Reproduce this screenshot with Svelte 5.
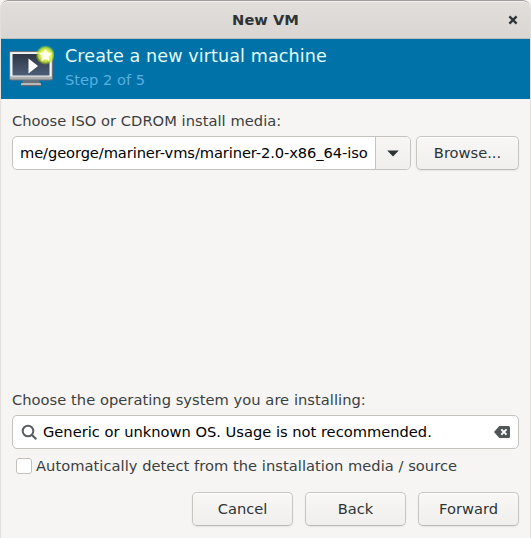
<script>
  let isoPath = 'me/george/mariner-vms/mariner-2.0-x86_64-iso';
  let osName = 'Generic or unknown OS. Usage is not recommended.';
  const actions = ['Cancel', 'Back', 'Forward'];
</script>

<div class="window">
  <header class="titlebar">
    <span class="title">New VM</span>
    <button class="close" aria-label="Close">
      <svg width="10" height="10" viewBox="0 0 10 10"><path d="M1.4 1.4 8.6 8.6M8.6 1.4 1.4 8.6" stroke="#2e3436" stroke-width="2.3" /></svg>
    </button>
  </header>

  <section class="banner">
    <svg class="vm" width="48" height="46" viewBox="0 0 48 46">
      <defs>
        <linearGradient id="screen" x1="0" y1="0" x2="0" y2="1">
          <stop offset="0" stop-color="#2e3644" /><stop offset="1" stop-color="#4d5e78" />
        </linearGradient>
        <linearGradient id="chin" x1="0" y1="0" x2="0" y2="1">
          <stop offset="0" stop-color="#e4e4e4" /><stop offset="1" stop-color="#a9abad" />
        </linearGradient>
        <radialGradient id="glow">
          <stop offset="0" stop-color="#fffff0" /><stop offset=".4" stop-color="#f4ff70" />
          <stop offset=".72" stop-color="#c8e830" stop-opacity=".85" /><stop offset="1" stop-color="#9dcc20" stop-opacity="0" />
        </radialGradient>
      </defs>
      <path d="M17 37h16l1 4H16z" fill="#68737c" />
      <rect x="15" y="40" width="20" height="3" rx="1" fill="#b9b9b9" />
      <rect x="15" y="42" width="20" height="1.2" rx=".6" fill="#696969" />
      <rect x="3.5" y="8.5" width="43" height="28.5" rx="1.5" fill="url(#chin)" stroke="#6d7378" />
      <rect x="4.5" y="9.5" width="41" height="24" fill="#f3f3f3" />
      <rect x="6.5" y="11" width="37" height="21.5" fill="url(#screen)" />
      <path d="M22.5 15.5v15l9.5-7.5z" fill="#fff" />
      <circle cx="39.5" cy="12" r="10" fill="url(#glow)" />
      <path d="m39.5 6.2 1.8 3.9 4.3.4-3.3 3 1 4.3-3.8-2.3-3.8 2.3 1-4.3-3.3-3 4.3-.4z" fill="#fffff4" stroke="#fffff4" stroke-opacity=".4" />
    </svg>
    <div class="heading">
      <h1>Create a new virtual machine</h1>
      <p>Step 2 of 5</p>
    </div>
  </section>

  <main>
    <label for="iso">Choose ISO or CDROM install media:</label>
    <div class="media">
      <div class="combo">
        <input id="iso" bind:value={isoPath} />
        <button class="drop" aria-label="Show media">
          <svg width="12" height="7" viewBox="0 0 12 7"><path d="M.2.6h11.6L6 6.6z" fill="#2e3436" /></svg>
        </button>
      </div>
      <button class="btn browse">Browse...</button>
    </div>

    <div class="spacer"></div>

    <label for="os">Choose the operating system you are installing:</label>
    <div class="search">
      <svg width="17" height="17" viewBox="0 0 17 17" fill="none" stroke="#5a5e60"><circle cx="7" cy="7" r="5.3" stroke-width="2" /><path d="m11 11 4.3 4.2" stroke-width="2.3" /></svg>
      <input id="os" bind:value={osName} />
      <svg width="16" height="12" viewBox="0 0 16 12"><path d="M5.3 0H14.5Q16 0 16 1.5v9Q16 12 14.5 12H5.3L0 6z" fill="#505557" /><path d="m7.3 3.4 5.2 5.2m0-5.2L7.3 8.6" stroke="#fff" stroke-width="2" /></svg>
    </div>
    <label class="check"><input type="checkbox" />Automatically detect from the installation media / source</label>

    <footer>
      {#each actions as action}
        <button class="btn">{action}</button>
      {/each}
    </footer>
  </main>
</div>

<style>
  :global(body) { background: #f6f5f4; overflow: hidden; }
  .window, .window button, .window input {
    font-family: 'DejaVu Sans', sans-serif;
    font-size: 14.667px;
    box-sizing: border-box;
  }
  .window {
    height: 538px;
    display: flex;
    flex-direction: column;
    background: #f6f5f4;
    color: #3b3f41;
    border: solid #e2dfdc;
    border-width: 0 1px;
    border-radius: 8px 8px 0 0;
    overflow: hidden;
    white-space: nowrap;
  }
  .titlebar {
    box-sizing: border-box;
    height: 39px;
    display: grid;
    grid-template-columns: 34px 1fr 34px;
    align-items: center;
    border-top: 1px solid #a19b9b;
    border-bottom: 1px solid #b9bdbb;
    border-radius: 7px 7px 0 0;
    box-shadow: inset 0 1px #f5f3f1;
    background: linear-gradient(#e1dedb, #dad6d2);
  }
  .title {
    grid-column: 2;
    text-align: center;
    font-weight: bold;
    font-size: 14.667px;
    line-height: 18px;
    color: #2e3436;
  }
  .close { border: 0; padding: 0; background: none; display: flex; justify-content: center; }
  .banner {
    box-sizing: border-box;
    height: 60px;
    display: flex;
    background: #0072a8;
    padding-left: 5px;
  }
  .vm { margin-top: 4px; }
  .heading { margin-left: 11px; padding-top: 6px; }
  h1 { margin: 0; font-size: 17.6px; letter-spacing: 0.07px; font-weight: normal; line-height: 22px; color: #e4fafa; }
  p { margin: 4px 0 0; line-height: 18px; color: #5aaee0; }
  main {
    flex: 1;
    display: flex;
    flex-direction: column;
    padding: 12px 11px 12px;
  }
  label { line-height: 20px; letter-spacing: 0.04px; }
  .media { display: flex; gap: 5px; margin-top: 5px; }
  .combo, .search {
    box-sizing: border-box;
    height: 34px;
    display: flex;
    border: 1px solid #c6c2be;
    border-radius: 5px;
    background: #fff;
    overflow: hidden;
  }
  .combo { width: 399px; }
  .combo input, .search input {
    flex: 1;
    min-width: 0;
    border: 0;
    padding: 0 0 2px 7px;
    background: none;
    color: #000;
    outline: none;
  }
  .combo input { letter-spacing: -0.09px; }
  .drop {
    width: 35px;
    padding: 0;
    border: 0;
    border-left: 1px solid #c6c2be;
    background: linear-gradient(#f7f6f5, #f0efed);
    display: flex;
    align-items: center;
    justify-content: center;
  }
  .btn {
    height: 34px;
    padding: 0 0 2px;
    border: 1px solid #c9c5c1;
    border-bottom-color: #bdb8b3;
    border-radius: 5px;
    background: linear-gradient(#f8f7f6, #f0efed);
    box-shadow: inset 0 1px #fff, 0 1px 2px rgba(0, 0, 0, 0.07);
    color: #2e3436;
  }
  .browse { width: 103px; }
  .spacer { flex: 1; }
  .search { margin-top: 5px; align-items: center; padding: 0 8px 0 8px; }
  .search input { padding-left: 5px; }
  .check { display: flex; align-items: center; gap: 4px; margin-top: 7px; padding-left: 4px; }
  .check input {
    appearance: none;
    width: 16px;
    height: 16px;
    margin: 0;
    border: 1px solid #c3bfbb;
    border-radius: 3px;
    background: #fff;
  }
  footer { display: flex; justify-content: flex-end; gap: 12px; margin-top: 16px; }
  footer .btn { width: 101px; }
</style>
